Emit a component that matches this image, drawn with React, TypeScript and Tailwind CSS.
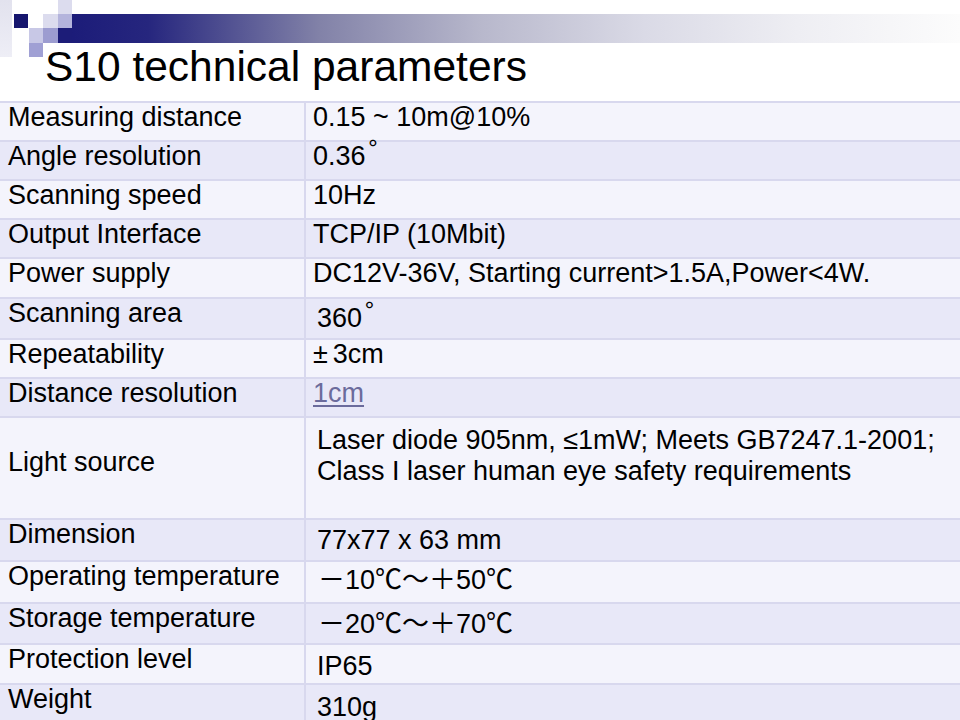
import React from "react";

const cjk = "font-['Noto_Sans_CJK_SC',sans-serif] leading-[20px]";

type Row = {
  label: string;
  value: React.ReactNode;
  h: string;
  dark: boolean;
  valuePt?: string;
  center?: boolean;
};

const Deg = () => <span className={`${cjk} relative top-[-7px] ml-[3px] text-[24px]`}>°</span>;

const Temp = ({ a, b }: { a: string; b: string }) => (
  <span className="pl-[5px]">
    <span className={cjk}>－</span>
    {a}
    <span className={cjk}>℃～＋</span>
    {b}
    <span className={cjk}>℃</span>
  </span>
);

const rows: Row[] = [
  { label: "Measuring distance", value: "0.15 ~ 10m@10%", h: "h-[39px]", dark: false },
  { label: "Angle resolution", value: <>0.36<Deg /></>, h: "h-[39px]", dark: true },
  { label: "Scanning speed", value: "10Hz", h: "h-[39px]", dark: false },
  { label: "Output Interface", value: "TCP/IP (10Mbit)", h: "h-[39px]", dark: true },
  { label: "Power supply", value: "DC12V-36V, Starting current>1.5A,Power<4W.", h: "h-[40px]", dark: false },
  { label: "Scanning area", value: <span className="pl-[4px]">360<Deg /></span>, h: "h-[41px]", dark: true, valuePt: "pt-[5px]" },
  { label: "Repeatability", value: <><span className="mr-[5px]">±</span>3cm</>, h: "h-[39px]", dark: false },
  {
    label: "Distance resolution",
    value: <span className="underline decoration-[2px] underline-offset-[3px] text-[#6b6b9c]">1cm</span>,
    h: "h-[39px]",
    dark: true,
  },
  {
    label: "Light source",
    value: (
      <div className="pl-[4px] leading-[31px]">
        <div>Laser diode 905nm, ≤1mW; Meets GB7247.1-2001;</div>
        <div>Class I laser human eye safety requirements</div>
      </div>
    ),
    h: "h-[102px]",
    dark: false,
    center: true,
    valuePt: "pt-[7px]",
  },
  { label: "Dimension", value: <span className="pl-[4px]">77x77 x 63 mm</span>, h: "h-[42px]", dark: true, valuePt: "pt-[6px]" },
  { label: "Operating temperature", value: <Temp a="10" b="50" />, h: "h-[42px]", dark: false, valuePt: "pt-[4px]" },
  { label: "Storage temperature", value: <Temp a="20" b="70" />, h: "h-[41px]", dark: true, valuePt: "pt-[6px]" },
  { label: "Protection level", value: <span className="pl-[4px]">IP65</span>, h: "h-[40px]", dark: false, valuePt: "pt-[7px]" },
  { label: "Weight", value: <span className="pl-[4px]">310g</span>, h: "h-[40px]", dark: true, valuePt: "pt-[8px]" },
];

function Decoration() {
  return (
    <svg width="960" height="60" className="absolute top-0 left-0" viewBox="0 0 960 60">
      <defs>
        <linearGradient id="bar" x1="58" y1="0" x2="960" y2="0" gradientUnits="userSpaceOnUse">
          <stop offset="0" stopColor="#1a1a78" />
          <stop offset="0.1" stopColor="#26267e" />
          <stop offset="0.29" stopColor="#8282a8" />
          <stop offset="0.47" stopColor="#b8b8cc" />
          <stop offset="0.65" stopColor="#dadae6" />
          <stop offset="0.82" stopColor="#eeeef3" />
          <stop offset="1" stopColor="#fcfcfc" />
        </linearGradient>
        <linearGradient id="strip" x1="0" y1="0" x2="0" y2="57" gradientUnits="userSpaceOnUse">
          <stop offset="0" stopColor="#e2e2ee" />
          <stop offset="1" stopColor="#eeeef6" />
        </linearGradient>
      </defs>
      <rect x="0" y="0" width="12" height="57" fill="url(#strip)" />
      <rect x="58" y="0" width="14" height="14" fill="#dcdcee" />
      <rect x="14" y="14" width="14" height="14" fill="#16166e" />
      <rect x="43" y="14" width="15" height="14" fill="#dcdcee" />
      <rect x="58" y="14" width="14" height="14" fill="#b4b4dc" />
      <rect x="72" y="14" width="888" height="29" fill="url(#bar)" />
      <rect x="58" y="28" width="14" height="15" fill="#1c1c78" />
      <rect x="29" y="28" width="14" height="15" fill="#c8c8e6" />
      <rect x="43" y="28" width="15" height="15" fill="#9c9cd0" />
      <rect x="29" y="43" width="14" height="14" fill="#a0a0d4" />
    </svg>
  );
}

export default function App() {
  return (
    <div className="w-[960px] h-[720px] overflow-hidden bg-white font-['Liberation_Sans',Arial,sans-serif] text-black">
      <div className="relative h-[101px]">
        <Decoration />
        <div className="relative pl-[45px] pt-[45px] text-[42.5px] leading-[44px]">S10 technical parameters</div>
      </div>
      <div className="border-t-2 border-[#d8d8ee]">
        {rows.map((r, i) => (
          <div
            key={i}
            className={`flex ${r.h} border-b-2 border-[#d8d8ee] ${r.dark ? "bg-[#e8e8f8]" : "bg-[#f4f4fc]"} text-[27px] leading-[28px]`}
          >
            <div
              className={`w-[306px] shrink-0 pl-[8px] border-r-2 border-[#d8d8ee] ${
                r.center ? "flex items-center pb-[13px]" : ""
              }`}
            >
              {r.label}
            </div>
            <div className={`flex-1 pl-[7px] whitespace-nowrap ${r.valuePt ?? ""}`}>{r.value}</div>
          </div>
        ))}
      </div>
    </div>
  );
}
